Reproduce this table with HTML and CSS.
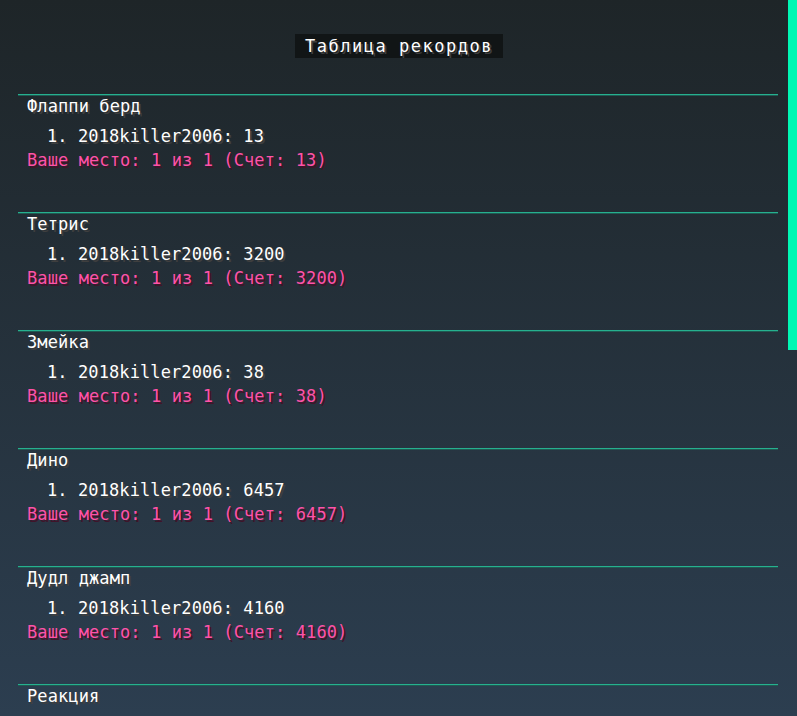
FILE: index.html
```html
<!DOCTYPE html>
<html lang="ru">
<head>
    <meta charset="UTF-8">
    <meta name="viewport" content="width=device-width, initial-scale=1.0">
    <title>Таблица рекордов</title>
    <link rel="stylesheet" href="styles.css">
</head>
<body>
    <div class="screen">
        <div class="header">
            <span class="title">Таблица рекордов</span>
        </div>
        <div class="list">
            <div class="game">
                <div class="game-name">Флаппи берд</div>
                <div class="entry">1. 2018killer2006: 13</div>
                <div class="place">Ваше место: 1 из 1 (Счет: 13)</div>
            </div>
            <div class="game">
                <div class="game-name">Тетрис</div>
                <div class="entry">1. 2018killer2006: 3200</div>
                <div class="place">Ваше место: 1 из 1 (Счет: 3200)</div>
            </div>
            <div class="game">
                <div class="game-name">Змейка</div>
                <div class="entry">1. 2018killer2006: 38</div>
                <div class="place">Ваше место: 1 из 1 (Счет: 38)</div>
            </div>
            <div class="game">
                <div class="game-name">Дино</div>
                <div class="entry">1. 2018killer2006: 6457</div>
                <div class="place">Ваше место: 1 из 1 (Счет: 6457)</div>
            </div>
            <div class="game">
                <div class="game-name">Дудл джамп</div>
                <div class="entry">1. 2018killer2006: 4160</div>
                <div class="place">Ваше место: 1 из 1 (Счет: 4160)</div>
            </div>
            <div class="game">
                <div class="game-name">Реакция</div>
            </div>
        </div>
        <div class="scrollbar"></div>
    </div>
</body>
</html>
```

FILE: styles.css
```css
html, body {
    margin: 0;
    height: 100%;
}
body {
    font-family: "DejaVu Sans Mono", "Liberation Mono", monospace;
    font-size: 17px;
    letter-spacing: 0.1px;
    color: #ffffff;
    background: linear-gradient(to bottom, #1e2528 0%, #2c3e50 100%);
    overflow: hidden;
}
.screen {
    position: relative;
    height: 716px;
    overflow: hidden;
}
.header {
    display: flex;
    justify-content: center;
    padding-top: 34px;
    padding-left: 1px;
}
.title {
    display: block;
    width: 208px;
    height: 24px;
    line-height: 24px;
    text-align: center;
    background-color: #111516;
    letter-spacing: 1.5px;
    text-shadow: 2px 2px 0 #3f3f3f;
}
.list {
    margin-top: 36px;
    padding: 0 19px 0 18px;
}
.game {
    border-top: 1px solid #26b08f;
    box-shadow: inset 0 1px 0 #1f5a52;
    padding: 1px 0 42px 9px;
}
.game-name,
.entry,
.place {
    line-height: 20px;
    white-space: nowrap;
    text-shadow: 2px 2px 0 #3f3f3f;
}
.entry {
    margin-top: 10px;
    padding-left: 20px;
}
.place {
    margin-top: 4px;
    color: #ff52a8;
    text-shadow: 2px 2px 0 #3f142a;
}
.scrollbar {
    position: absolute;
    top: 0;
    right: 0;
    width: 9px;
    height: 350px;
    background-color: #00f7b4;
}
```
